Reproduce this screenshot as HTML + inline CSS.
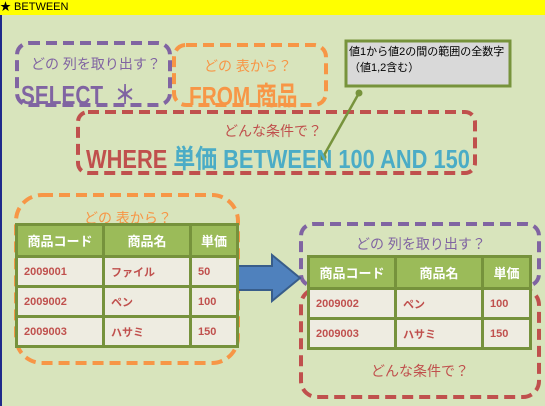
<!DOCTYPE html>
<html><head><meta charset="utf-8"><style>
body{margin:0;width:545px;height:406px;overflow:hidden;background:#d8e4bc;font-family:"Liberation Sans","Noto Sans CJK JP",sans-serif;position:relative}
.a{position:absolute;white-space:nowrap}
.bar{left:0;top:0;width:545px;height:15px;background:#ffff00;font-size:11px;line-height:15px}
.edge{left:0;top:15px;width:2px;height:391px;background:#1f2a8a}
table{position:absolute;border-collapse:collapse;font-family:"Liberation Sans","Noto Sans CJK JP",sans-serif}
td{border:3px solid #76923c;background:#eeece1;color:#c0504d;font-size:11px;font-weight:bold;height:27px;padding:0 0 0 6px}
th{border:3px solid #76923c;background:#9bbb59;color:#fff;font-size:13px;height:29px;padding:0}
.big{font-size:26px;font-weight:bold;transform:scaleX(.8);transform-origin:left}
</style></head><body>
<div class="a bar">★ BETWEEN</div>
<div class="a edge"></div>
<svg class="a" style="left:0;top:0" width="545" height="406">
<g fill="none" stroke-width="4" stroke-dasharray="11 6">
<rect x="17" y="43" width="153" height="62" rx="12" stroke="#8064a2"/>
<rect x="174" y="45" width="152" height="60" rx="12" stroke="#f79646"/>
<rect x="78" y="112" width="397" height="61" rx="10" stroke="#c0504d"/>
<rect x="16" y="195" width="222" height="168" rx="26" stroke="#f79646"/>
<rect x="301" y="224" width="238" height="62" rx="12" stroke="#8064a2"/>
<rect x="301" y="289" width="238" height="108" rx="16" stroke="#c0504d"/>
</g>
<rect x="346" y="41" width="164" height="45" fill="#d9d9d9" stroke="#77933c" stroke-width="3"/>
<line x1="359" y1="93" x2="323" y2="157" stroke="#77933c" stroke-width="2.5"/>
<circle cx="359" cy="93" r="3.5" fill="#77933c"/><circle cx="323" cy="157" r="3.5" fill="#77933c"/>
<path d="M237 266 H272 V255 L300 278 L272 301 V290 H237 Z" fill="#4f81bd" stroke="#385d8a" stroke-width="2"/>
</svg>
<div class="a" style="left:31px;top:54px;font-size:14px;color:#8064a2">どの 列を取り出す？</div>
<div class="a big" style="left:21px;top:75px;color:#8064a2">SELECT &nbsp;＊</div>
<div class="a" style="left:204px;top:56px;font-size:14px;color:#f79646">どの 表から？</div>
<div class="a big" style="left:189px;top:76px;color:#f79646">FROM 商品</div>
<div class="a" style="left:349px;top:44px;font-size:11px;line-height:16px;color:#000">値1から値2の間の範囲の全数字<br>（値1,2含む）</div>
<div class="a" style="left:224px;top:121px;font-size:14px;color:#c0504d">どんな条件で？</div>
<div class="a big" style="left:86px;top:139px;color:#c0504d;transform:scaleX(.84)">WHERE <span style="color:#4bacc6">単価 BETWEEN 100 AND 150</span></div>
<div class="a" style="left:84px;top:208px;font-size:14px;color:#f79646">どの 表から？</div>
<table style="left:15px;top:223px;width:224px">
<tr><th style="width:84px">商品コード</th><th style="width:84px">商品名</th><th>単価</th></tr>
<tr><td>2009001</td><td>ファイル</td><td>50</td></tr>
<tr><td>2009002</td><td>ペン</td><td>100</td></tr>
<tr><td>2009003</td><td>ハサミ</td><td>150</td></tr>
</table>
<div class="a" style="left:356px;top:234px;font-size:14px;color:#8064a2">どの 列を取り出す？</div>
<table style="left:307px;top:255px;width:225px">
<tr><th style="width:84px">商品コード</th><th style="width:84px">商品名</th><th>単価</th></tr>
<tr><td>2009002</td><td>ペン</td><td>100</td></tr>
<tr><td>2009003</td><td>ハサミ</td><td>150</td></tr>
</table>
<div class="a" style="left:371px;top:361px;font-size:14px;color:#c0504d">どんな条件で？</div>
</body></html>
